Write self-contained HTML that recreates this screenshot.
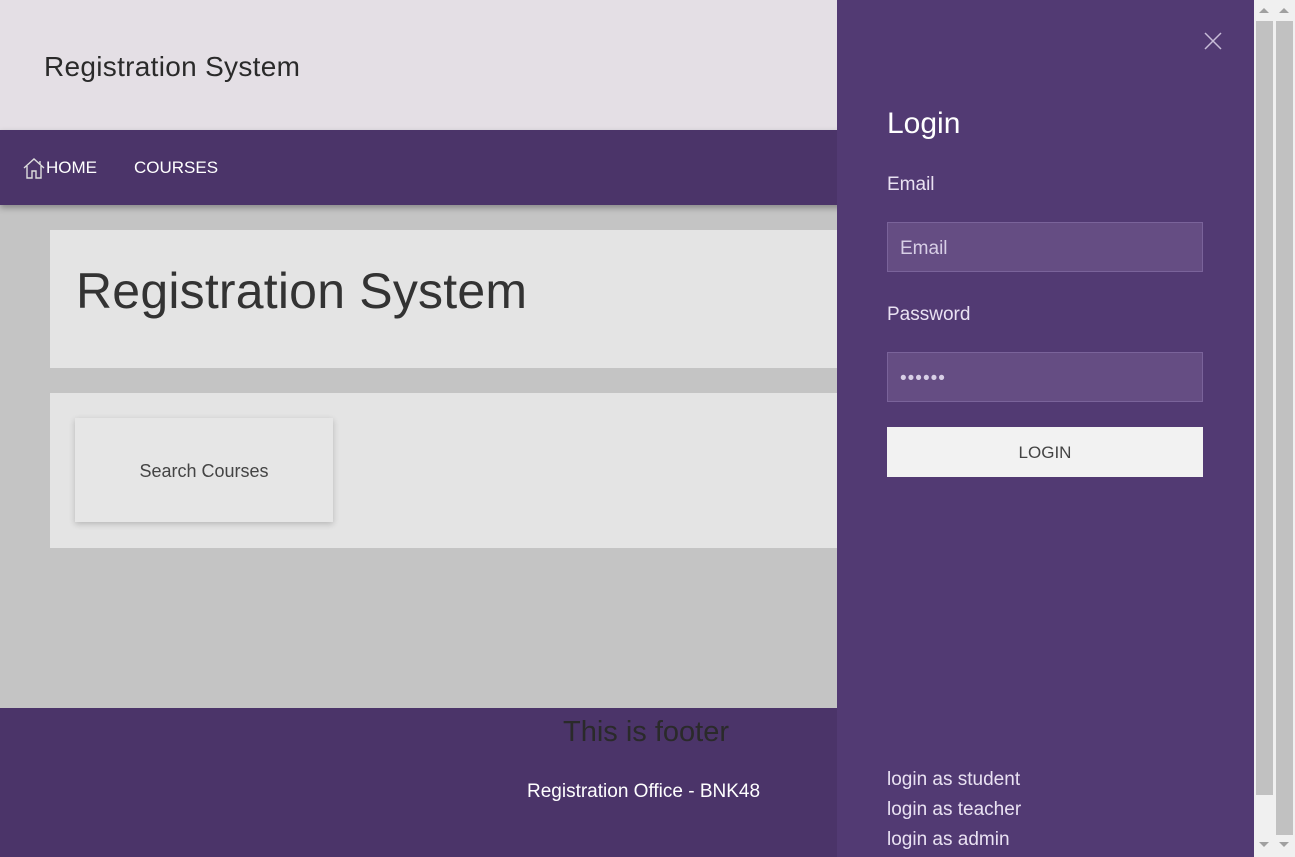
<!DOCTYPE html>
<html><head><style>
*{margin:0;padding:0;box-sizing:border-box}
body{width:1295px;height:857px;overflow:hidden;font-family:"Liberation Sans",sans-serif;background:#c4c4c4;position:relative}
.hdr{position:absolute;left:0;top:0;width:1254px;height:130px;background:#e4dfe5}
.hdr h1{position:absolute;left:44px;top:51px;font-size:28px;font-weight:normal;color:#2a2a2a;letter-spacing:0.3px}
.nav{position:absolute;left:0;top:130px;width:1254px;height:75px;background:#4b3469;box-shadow:0 3px 6px rgba(0,0,0,.3)}
.nav span{position:absolute;top:28px;color:#fff;font-size:17px}
.c1{position:absolute;left:50px;top:230px;width:800px;height:138px;background:#e4e4e4}
.c1 h2{position:absolute;left:26px;top:32px;font-size:50px;font-weight:normal;color:#333;letter-spacing:0.2px}
.c2{position:absolute;left:50px;top:393px;width:800px;height:155px;background:#e4e4e4}
.btn{position:absolute;left:25px;top:25px;width:258px;height:104px;background:#e6e6e6;box-shadow:0 2px 6px rgba(0,0,0,.2);text-align:center;line-height:106px;font-size:18px;color:#444}
.ft{position:absolute;left:0;top:708px;width:1254px;height:149px;background:#4b3469}
.ft .a{position:absolute;left:563px;top:8px;font-size:29px;color:#2a2a2a}
.ft .b{position:absolute;left:527px;top:73px;font-size:19px;color:#fff}
.pn{position:absolute;left:837px;top:0;width:417px;height:857px;background:#523a73;color:#e9e1f2}
.pn .t{position:absolute;left:50px;top:107px;font-size:30px;color:#fff}
.lb{position:absolute;left:50px;font-size:19px}
.in{position:absolute;left:50px;width:316px;height:50px;background:#654d83;border:1px solid #7a639a;font-size:19px;color:#d8cfe6;padding:15px 12px 0}
.lg{position:absolute;left:50px;top:427px;width:316px;height:50px;background:#f2f2f2;color:#444;text-align:center;line-height:52px;font-size:17px}
.lk{position:absolute;left:50px;font-size:19px}
.sb{position:absolute;top:0;width:20px;height:857px;background:#f0f0f0}
.th{position:absolute;left:2px;top:21px;width:17px;background:#c1c1c1}
</style></head><body>
<div class="hdr"><h1>Registration System</h1></div>
<div class="nav">
<svg style="position:absolute;left:22px;top:27px" width="24" height="22" viewBox="0 0 24 22"><path d="M2 11 L12 2 L22 11 M5 9 V21 H10 V14 H14 V21 H19 V9 M18 4 V7" fill="none" stroke="#ddd" stroke-width="1.4"/></svg>
<span style="left:46px">HOME</span><span style="left:134px">COURSES</span></div>
<div class="c1"><h2>Registration System</h2></div>
<div class="c2"><div class="btn">Search Courses</div></div>
<div class="ft"><div class="a">This is footer</div><div class="b">Registration Office - BNK48</div></div>
<div class="pn">
<svg style="position:absolute;left:367px;top:32px" width="18" height="18"><path d="M1 1L17 17M17 1L1 17" stroke="#c8bcd8" stroke-width="1.5"/></svg>
<div class="t">Login</div>
<div class="lb" style="top:174px">Email</div>
<div class="in" style="top:222px">Email</div>
<div class="lb" style="top:304px">Password</div>
<div class="in" style="top:352px;letter-spacing:1px">••••••</div>
<div class="lg">LOGIN</div>
<div class="lk" style="top:769px">login as student</div>
<div class="lk" style="top:799px">login as teacher</div>
<div class="lk" style="top:829px">login as admin</div>
</div>
<div class="sb" style="left:1254px"><div class="th" style="height:774px"></div></div>
<div class="sb" style="left:1274px;width:21px"><div class="th" style="height:814px"></div></div>
<div style="position:absolute;left:1259px;top:8px;border:5px solid transparent;border-bottom-color:#a0a0a0;border-top:0"></div>
<div style="position:absolute;left:1279px;top:8px;border:5px solid transparent;border-bottom-color:#a0a0a0;border-top:0"></div>
<div style="position:absolute;left:1259px;top:842px;border:5px solid transparent;border-top-color:#a0a0a0;border-bottom:0"></div>
<div style="position:absolute;left:1279px;top:842px;border:5px solid transparent;border-top-color:#a0a0a0;border-bottom:0"></div>
</body></html>
